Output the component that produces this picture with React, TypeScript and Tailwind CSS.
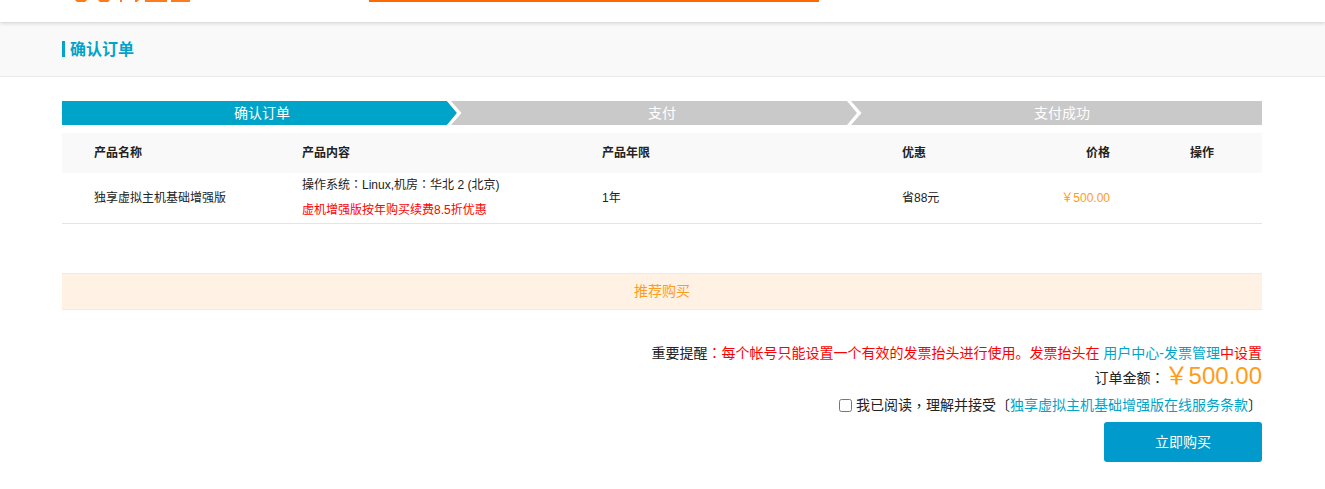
const font = "font-['Microsoft_YaHei','Liberation_Sans','Noto_Sans_CJK_SC',sans-serif]";

// Full-width colon sits centred in the reference, the SC face puts it low left
function Colon() {
  return <span className="font-['Noto_Sans_CJK_JP']">：</span>;
}

function Chevron({ active }: { active?: boolean }) {
  return (
    <svg viewBox="0 0 15 24" className="absolute right-0 top-0 h-6 w-[15px]">
      <rect width="15" height="24" fill="#c9c9c9" />
      {active && <path d="M0 0 L10 12 L0 24 Z" fill="#00a4c9" />}
      <path d="M0 0 L4 0 L14.5 12 L4 24 L0 24 L10 12 Z" fill="#fff" />
    </svg>
  );
}

function Step({ label, active, arrow }: { label: string; active?: boolean; arrow?: boolean }) {
  return (
    <div
      className={`relative flex h-6 w-[400px] items-center justify-center text-[14px] text-white ${
        active ? "bg-[#00a4c9]" : "bg-[#c9c9c9]"
      }`}
    >
      {label}
      {arrow && <Chevron active={active} />}
    </div>
  );
}

export default function App() {
  return (
    <div className={`h-[489px] w-[1325px] overflow-hidden bg-white text-[12px] text-[#222] ${font}`}>
      {/* Header, logo is cut off at the top of the page */}
      <div className="relative z-10 flex h-[22px] bg-white shadow-[0_1px_4px_rgba(0,0,0,0.18)]">
        <svg viewBox="0 0 115 3" className="ml-[75px] h-[3px] w-[115px]">
          <path
            d="M0 0 H12 L10 2 H2 Z M23 0 H35 L33 2 H25 Z M45 0 H47 V2 H45 Z M60 0 H64 L62 2 H60 Z M70 0 H92 V2 H70 Z M96 0 H115 V2 H96 Z"
            fill="#ff7a1a"
          />
        </svg>
        <div className="ml-[179px] h-[2px] w-[450px] bg-[#ff6a00]" />
      </div>

      {/* Title band */}
      <div className="flex h-[55px] items-center border-b border-[#ebebeb] bg-[#f9f9f9] pl-[62px]">
        <div className="h-4 w-[3px] bg-[#00a4c9]" />
        <h1 className="ml-[5px] pt-[2px] text-[16px] font-bold text-[#00a4c9]">确认订单</h1>
      </div>

      <div className="ml-[62px] mt-6 w-[1200px]">
        {/* Steps */}
        <div className="flex">
          <Step label="确认订单" active arrow />
          <Step label="支付" arrow />
          <Step label="支付成功" />
        </div>

        {/* Order table */}
        <div className="mt-2 flex h-10 items-center bg-[#f9f9f9] font-bold">
          <div className="w-[240px] pl-8">产品名称</div>
          <div className="w-[300px]">产品内容</div>
          <div className="w-[300px]">产品年限</div>
          <div className="w-[100px]">优惠</div>
          <div className="w-[108px] text-right">价格</div>
          <div className="w-[80px] pl-[80px] whitespace-nowrap">操作</div>
        </div>
        <div className="flex h-[51px] items-center border-b border-[#e5e5e5]">
          <div className="w-[240px] pl-8">独享虚拟主机基础增强版</div>
          <div className="w-[300px] pb-[2px]">
            <div className="leading-[24px]">
              操作系统<Colon />Linux,机房<Colon />华北 2 (北京)
            </div>
            <div className="leading-[26px] text-[#f00]">虚机增强版按年购买续费8.5折优惠</div>
          </div>
          <div className="w-[300px]">1年</div>
          <div className="w-[100px]">省88元</div>
          <div className="w-[108px] text-right text-[#ff9c1a]">￥500.00</div>
        </div>

        {/* Recommended */}
        <div className="mt-[49px] flex h-[37px] items-center justify-center border-y border-[#ebebeb] bg-[#fff2e5] text-[14px] text-[#ff9c1a]">
          推荐购买
        </div>

        {/* Summary */}
        <div className="mt-[33px] flex flex-col items-end text-[14px]">
          <p className="leading-[18px] text-[#f00]">
            <span className="text-[#222]">重要提醒</span>
            <Colon />每个帐号只能设置一个有效的发票抬头进行使用。发票抬头在{" "}
            <span className="text-[#00a4c9]">用户中心-发票管理</span>中设置
          </p>
          <div className="flex h-[28px] items-center">
            <span className="mt-1">
              订单金额<Colon />
            </span>
            <span className="text-[24px] text-[#ff9c1a]">￥500.00</span>
          </div>
          <label className="mt-[5px] flex h-5 items-center">
            <input type="checkbox" className="mr-1 h-[13px] w-[13px]" />
            我已阅读<span className="font-['Noto_Sans_CJK_TC']">，</span>理解并接受〔
            <span className="text-[#00a4c9]">独享虚拟主机基础增强版在线服务条款</span>〕
          </label>
          <button type="button" className="mt-[7px] h-10 w-[158px] rounded-[3px] bg-[#009bcc] text-white">
            立即购买
          </button>
        </div>
      </div>
    </div>
  );
}
